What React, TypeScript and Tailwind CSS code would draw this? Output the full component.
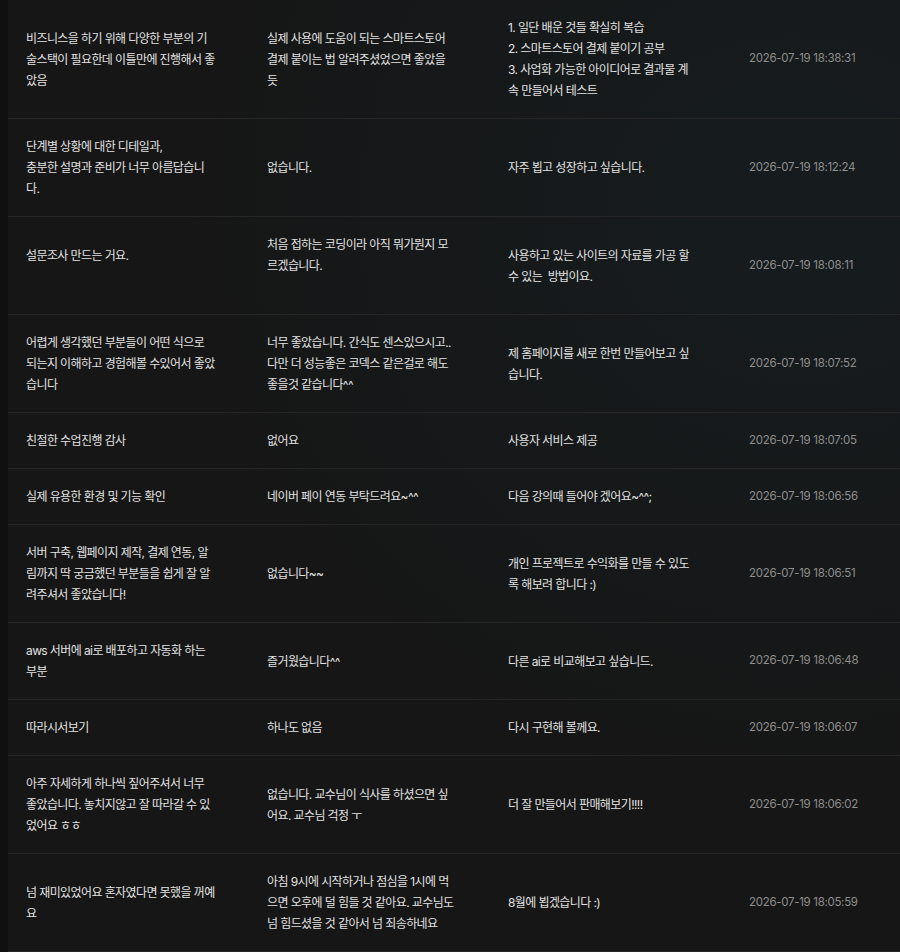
import React from "react";

type Row = { a: string[]; b: string[]; c: string[]; t: string };

const rows: Row[] = [
  {
    a: ["비즈니스을 하기 위해 다양한 부분의 기", "술스택이 필요한데 이틀만에 진행해서 좋", "았음"],
    b: ["실제 사용에 도움이 되는 스마트스토어", "결제 붙이는 법 알려주셨었으면 좋았을", "듯"],
    c: ["1. 일단 배운 것들 확실히 복습", "2. 스마트스토어 결제 붙이기 공부", "3. 사업화 가능한 아이디어로 결과물 계", "속 만들어서 테스트"],
    t: "2026-07-19 18:38:31",
  },
  {
    a: ["단계별 상황에 대한 디테일과,", "충분한 설명과 준비가 너무 아름답습니", "다."],
    b: ["없습니다."],
    c: ["자주 뵙고 성장하고 싶습니다."],
    t: "2026-07-19 18:12:24",
  },
  {
    a: ["설문조사 만드는 거요.", ""],
    b: ["처음 접하는 코딩이라 아직 뭐가뭔지 모", "르겠습니다.", ""],
    c: ["사용하고 있는 사이트의 자료를 가공 할", "수 있는  방법이요."],
    t: "2026-07-19 18:08:11",
  },
  {
    a: ["어렵게 생각했던 부분들이 어떤 식으로", "되는지 이해하고 경험해볼 수있어서 좋았", "습니다"],
    b: ["너무 좋았습니다. 간식도 센스있으시고..", "다만 더 성능좋은 코덱스 같은걸로 해도", "좋을것 같습니다^^"],
    c: ["제 홈페이지를 새로 한번 만들어보고 싶", "습니다."],
    t: "2026-07-19 18:07:52",
  },
  { a: ["친절한 수업진행 감사"], b: ["없어요"], c: ["사용자 서비스 제공"], t: "2026-07-19 18:07:05" },
  {
    a: ["실제 유용한 환경 및 기능 확인"],
    b: ["네이버 페이 연동 부탁드려요~^^"],
    c: ["다음 강의때 들어야 겠어요~^^;"],
    t: "2026-07-19 18:06:56",
  },
  {
    a: ["서버 구축, 웹페이지 제작, 결제 연동, 알", "림까지 딱 궁금했던 부분들을 쉽게 잘 알", "려주셔서 좋았습니다!"],
    b: ["없습니다~~"],
    c: ["개인 프로젝트로 수익화를 만들 수 있도", "록 해보려 합니다 :)"],
    t: "2026-07-19 18:06:51",
  },
  {
    a: ["aws 서버에 ai로 배포하고 자동화 하는", "부분"],
    b: ["즐거웠습니다^^"],
    c: ["다른 ai로 비교해보고 싶습니드."],
    t: "2026-07-19 18:06:48",
  },
  { a: ["따라시서보기"], b: ["하나도 없음"], c: ["다시 구현해 볼께요."], t: "2026-07-19 18:06:07" },
  {
    a: ["아주 자세하게 하나씩 짚어주셔서 너무", "좋았습니다. 놓치지않고 잘 따라갈 수 있", "었어요 ㅎㅎ"],
    b: ["없습니다. 교수님이 식사를 하셨으면 싶", "어요. 교수님 걱정 ㅜ"],
    c: ["더 잘 만들어서 판매해보기!!!!"],
    t: "2026-07-19 18:06:02",
  },
  {
    a: ["넘 재미있었어요 혼자였다면 못했을 꺼예", "요"],
    b: ["아침 9시에 시작하거나 점심을 1시에 먹", "으면 오후에 덜 힘들 것 같아요. 교수님도", "넘 힘드셨을 것 같아서 넘 죄송하네요"],
    c: ["8월에 뵙겠습니다 :)"],
    t: "2026-07-19 18:05:59",
  },
];

function Cell({ lines }: { lines: string[] }) {
  return (
    <div className="px-[18px] py-[17px] flex flex-col justify-center text-[12px] leading-[21px] tracking-[-0.6px] text-[#e2e2e2]">
      {lines.map((l, i) => (
        <div key={i} className="whitespace-pre h-[21px]">
          {l}
        </div>
      ))}
    </div>
  );
}

export default function App() {
  return (
    <div
      className="min-h-[952px] w-full bg-[#0f0f0f] flex"
      style={{ fontFamily: "Inter, 'Noto Sans CJK KR', sans-serif" }}
    >
      <div className="w-[8px] shrink-0 bg-[#101010]" />
      <div className="flex-1 bg-[#161616] bg-[radial-gradient(ellipse_at_88%_22%,#161c1e_0%,#161616_55%)]">
        {rows.map((r, i) => (
          <div
            key={i}
            className="grid grid-cols-[241px_241px_241px_1fr] border-b border-[#262626]"
          >
            <Cell lines={r.a} />
            <Cell lines={r.b} />
            <Cell lines={r.c} />
            <div className="px-[18px] py-[17px] flex items-center text-[11.5px] tracking-[-0.3px] text-[#8e8e8e] whitespace-nowrap">
              {r.t}
            </div>
          </div>
        ))}
      </div>
    </div>
  );
}
